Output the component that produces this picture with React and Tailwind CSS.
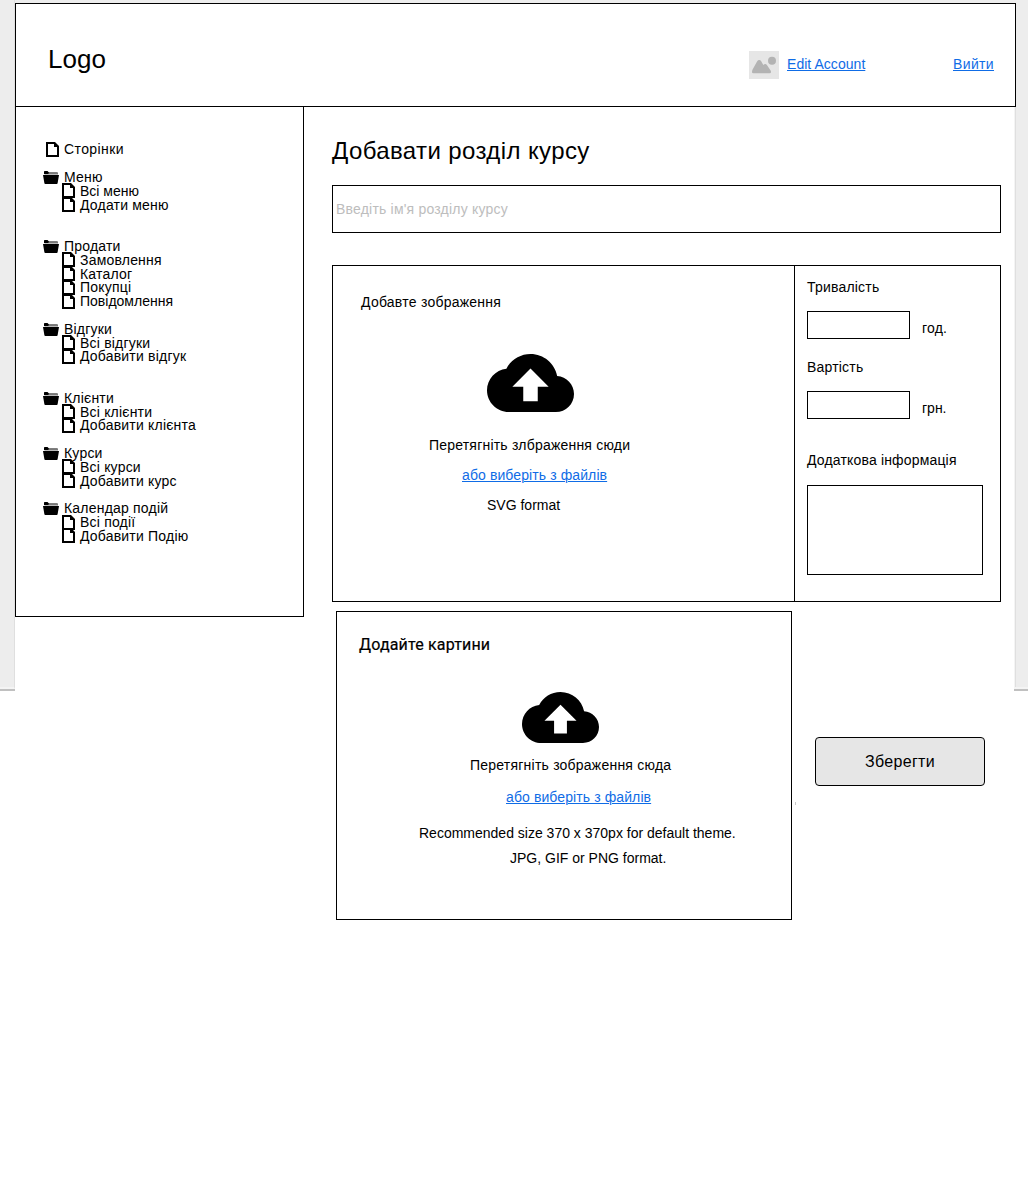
import React from "react";

const menu = [
  { title: "Меню", items: ["Всі меню", "Додати меню"], space: "mb-[27.6px]" },
  { title: "Продати", items: ["Замовлення", "Каталог", "Покупці", "Повідомлення"], space: "mb-[13.8px]" },
  { title: "Відгуки", items: ["Всі відгуки", "Добавити відгук"], space: "mb-[27.6px]" },
  { title: "Клієнти", items: ["Всі клієнти", "Добавити клієнта"], space: "mb-[13.8px]" },
  { title: "Курси", items: ["Всі курси", "Добавити курс"], space: "mb-[13.8px]" },
  { title: "Календар подій", items: ["Всі події", "Добавити Подію"], space: "" },
];

function FileIcon() {
  return (
    <svg className="-mt-[1.6px] h-[15px] w-[13px] shrink-0" viewBox="0 0 13 15">
      <path d="M0 0H9L13 4V15H0ZM2 2V13H11V5H8V2Z" fill="#000" fillRule="evenodd" />
    </svg>
  );
}

function FolderIcon() {
  return (
    <svg className="-mt-[0.6px] h-[13px] w-4 shrink-0" viewBox="0 0 16 13">
      <path d="M1 3V0.7Q1 0 1.7 0H4.5L6 1.5H14.3Q15 1.5 15 2.2V3Z" fill="#000" />
      <path d="M5.5 2H15V3.5H1.5V3H5.5Z" fill="#777" />
      <path d="M0 4H16L14.6 12.2Q14.5 13 13.7 13H2.3Q1.5 13 1.4 12.2Z" fill="#000" />
    </svg>
  );
}

function CloudIcon({ className }) {
  return (
    <svg className={className} viewBox="0 4 24 16" preserveAspectRatio="none">
      <path d="M19.35 10.04C18.67 6.59 15.64 4 12 4 9.11 4 6.6 5.64 5.35 8.04 2.34 8.36 0 10.91 0 14c0 3.31 2.69 6 6 6h13c2.76 0 5-2.24 5-5 0-2.64-2.05-4.78-4.65-4.96zM14 13v4h-4v-4H7l5-5 5 5h-3z" />
    </svg>
  );
}

function AccountImage() {
  return (
    <svg className="h-7 w-[30px]" viewBox="0 0 30 28">
      <rect width="30" height="28" fill="#e6e6e6" />
      <circle cx="23" cy="9.8" r="4" fill="#b3b3b3" />
      <path d="M3 21Q3 19.8 3.6 18.6L8.2 10.2Q8.9 9 10.2 9Q11.5 9 12.2 10.2L14.3 14Q15.2 13 16.2 13Q17.3 13 17.9 14L21.6 19.6Q22 20.3 22 21Q22 22.3 20.7 22.3H4.3Q3 22.3 3 21Z" fill="#b3b3b3" />
    </svg>
  );
}

function Link({ children, className }) {
  return (
    <a href="#" className={`text-[#0f6ce6] underline decoration-1 underline-offset-1 ${className}`}>
      {children}
    </a>
  );
}

function Sidebar() {
  return (
    <nav className="h-[510px] w-[289px] border border-t-0 border-black pt-[36.45px] leading-[13.8px] tracking-[0.2px]">
      <div className="mb-[13.8px] flex h-[13.8px] items-center gap-[5px] pl-[30px]">
        <FileIcon />
        <span className="tracking-[0.4px]">Сторінки</span>
      </div>
      {menu.map((group) => (
        <section key={group.title} className={group.space}>
          <div className="flex h-[13.8px] items-center gap-[5px] pl-[27px]">
            <FolderIcon />
            <span>{group.title}</span>
          </div>
          {group.items.map((item) => (
            <div key={item} className="flex h-[13.8px] items-center gap-[5px] pl-[46px]">
              <FileIcon />
              <span className={item === "Повідомлення" || item === "Всі меню" ? "tracking-normal" : ""}>{item}</span>
            </div>
          ))}
        </section>
      ))}
    </nav>
  );
}

function Gutter({ className, edge }) {
  return (
    <div className={`h-[691px] shrink-0 border-b-2 border-[#c0c0c0] bg-[#ededed] ${className}`}>
      <div className={`h-[689px] border-b-2 border-b-[#f4f4f4] ${edge}`} />
    </div>
  );
}

export default function App() {
  return (
    <div className="flex h-[1200px] w-[1028px] overflow-hidden whitespace-nowrap bg-white font-['Liberation_Sans',Arial,sans-serif] text-sm text-black">
      <Gutter className="w-[15px]" edge="border-r border-r-[#dfdfdf]" />
      <div className="w-[999px] shrink-0">
        <div className="h-[3px] bg-[#ededed]" />
        <header className="relative flex h-[104px] w-[1001px] border border-black bg-white">
          <div className="ml-8 mt-[39px] w-[701px] text-[26px] leading-8">Logo</div>
          <div className="mt-[47px]">
            <AccountImage />
          </div>
          <Link className="ml-2 mt-[50px] h-5 w-[166px] leading-5 tracking-[0.04px]">Edit Account</Link>
          <Link className="mt-[50px] h-5 leading-5 tracking-[0.36px]">Вийти</Link>
        </header>

        <div className="flex">
          <Sidebar />
          <main className="ml-7 w-[669px] pt-[30px] tracking-[0.2px]">
            <h1 className="text-2xl leading-7 tracking-[0.39px]">Добавати розділ курсу</h1>
            <div className="mt-5 flex h-12 border border-black pl-[3px] pt-[13px] leading-5 text-[#bdbdbd]">
              Введіть ім'я розділу курсу
            </div>

            <div className="mt-8 flex h-[337px] border border-black leading-5">
              <section className="w-[462px] border-r border-black pt-[26px]">
                <h2 className="ml-7 tracking-[0.24px]">Добавте зображення</h2>
                <CloudIcon className="ml-[154px] mt-[42px] h-[58px] w-[87px]" />
                <p className="ml-24 mt-[23px]">Перетягніть злбраження сюди</p>
                <Link className="ml-[129px] mt-2.5 block w-max tracking-[0.1px]">або виберіть з файлів</Link>
                <p className="ml-[154px] mt-2.5 tracking-normal">SVG format</p>
              </section>
              <section className="pl-3 pt-[11px]">
                <h3>Тривалість</h3>
                <div className="mt-[14px] flex gap-3">
                  <div className="h-7 w-[103px] border border-black" />
                  <span className="mt-[7px]">год.</span>
                </div>
                <h3 className="mt-[18px]">Вартість</h3>
                <div className="mt-[14px] flex gap-3">
                  <div className="h-7 w-[103px] border border-black" />
                  <span className="mt-[7px] tracking-normal">грн.</span>
                </div>
                <h3 className="mt-[31px] tracking-[0.17px]">Додаткова інформація</h3>
                <div className="mt-[15px] h-[90px] w-[176px] border border-black" />
              </section>
            </div>

            <div className="ml-1 mt-[9px] flex items-start leading-5">
              <section className="h-[309px] w-[456px] border border-black pt-[23px]">
                <h2 className="ml-[22px] font-[Roboto,sans-serif] text-base leading-5 tracking-[0.16px] [-webkit-text-stroke:0.2px_black]">
                  Додайте картини
                </h2>
                <CloudIcon className="ml-[185px] mt-[37px] h-[51px] w-[77px]" />
                <p className="ml-[133px] mt-3 tracking-[0.22px]">Перетягніть зображення сюда</p>
                <Link className="ml-[169px] mt-3 block w-max tracking-[0.1px]">або виберіть з файлів</Link>
                <p className="ml-[82px] mt-4 tracking-normal">Recommended size 370 x 370px for default theme.</p>
                <p className="ml-[173px] mt-[5px] tracking-normal">JPG, GIF or PNG format.</p>
              </section>
              <div className="ml-[3px] mt-[191px] h-[3px] w-px bg-[#c8c8c8]" />
              <button className="ml-[19px] mt-[126px] h-[49px] w-[170px] rounded border border-black bg-[#e6e6e6] text-base leading-5 tracking-[0.33px]">
                Зберегти
              </button>
            </div>
          </main>
        </div>
      </div>
      <div className="w-[14px] shrink-0">
        <div className="h-[3px] bg-[#ededed]" />
        <div className="h-[686px] border-b-2 border-l border-b-[#f4f4f4] border-l-[#f4f4f4]">
          <div className="h-[684px] border-l border-[#dfdfdf] bg-[#ededed]" />
        </div>
        <div className="h-0.5 bg-[#c0c0c0]" />
      </div>
    </div>
  );
}
